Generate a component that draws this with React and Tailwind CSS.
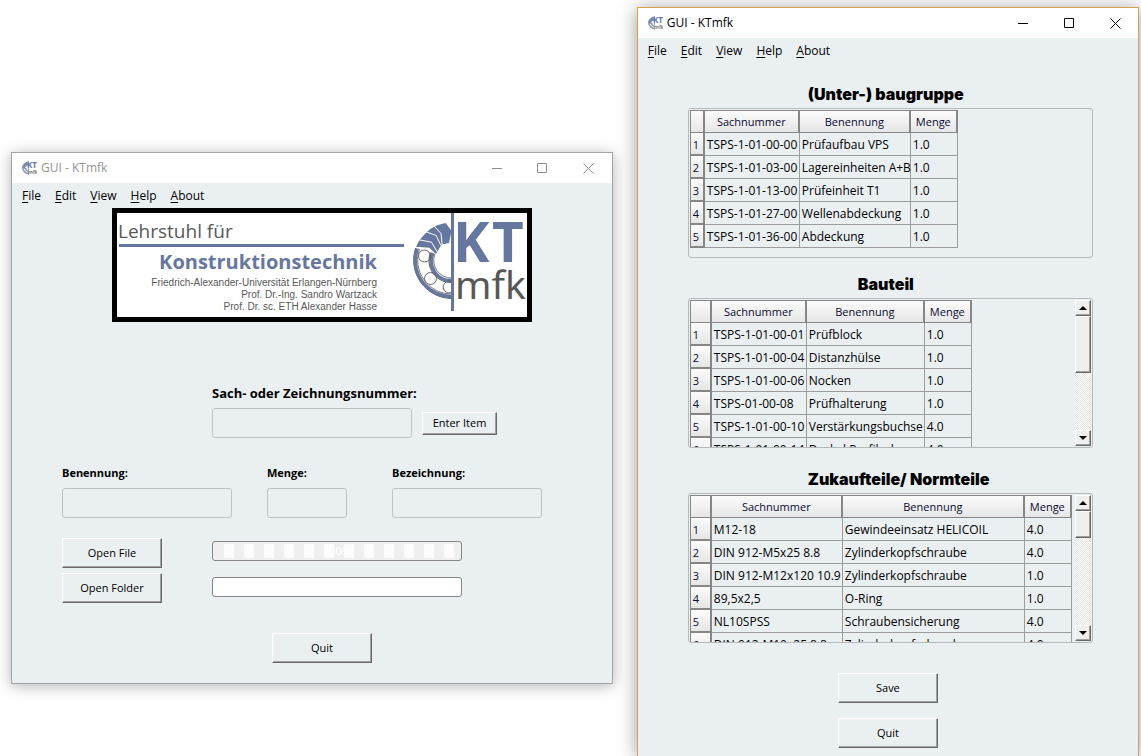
import React from "react";

const BUTTON =
  "border border-t-white border-l-white border-r-[#696969] border-b-[#696969] bg-[#eaeff2] text-[11px] leading-4 shadow-[inset_-1px_-1px_0_#a0a0a0,inset_1px_1px_0_#f0f0f0]";
const FIELD =
  "block h-[30px] w-full rounded-[3px] border border-[#c0c2c2] bg-transparent px-1 text-xs outline-none";

function AppIcon() {
  return (
    <svg className="size-4" viewBox="0 0 16 16" aria-hidden="true">
      <path d="M7.500 1.500A6.800 6.800 0 0 0 1 8l3 1a3.600 3.600 0 0 1 3.500-3.500z" fill="#7c8bb0" />
      <path d="M1.800 7.500a6 6 0 0 0 5.700 6M4.500 8a3.500 3.500 0 0 0 3 3.200" fill="none" stroke="#8f9bb5" strokeWidth="1.600" />
      <path d="M7.500 1v14" stroke="#9aa6c3" />
      <text x="6" y="8" fontSize="8" fontWeight="700" fontFamily="Noto Sans, sans-serif" fill="#6478a6">KT</text>
      <text x="7" y="14" fontSize="5" fontWeight="700" fontFamily="Noto Sans, sans-serif" fill="#7d7d7d">mfk</text>
    </svg>
  );
}

function TitleBar({ active }) {
  return (
    <header className="flex h-[30px] items-center bg-white pl-[9px]">
      <AppIcon />
      <h1 className={active ? "ml-1 grow text-xs text-black" : "ml-1 grow text-xs text-[#949494]"}>GUI - KTmfk</h1>
      <div className={active ? "flex text-black" : "flex text-[#8f8f8f]"}>
        <button type="button" aria-label="Minimize" className="grid h-[30px] w-[45px] place-items-center">
          <svg width="11" height="11" viewBox="0 0 11 11" stroke="currentColor" fill="none"><path d="M0 5.500h10" /></svg>
        </button>
        <button type="button" aria-label="Maximize" className="grid h-[30px] w-[46px] place-items-center">
          <svg width="11" height="11" viewBox="0 0 11 11" stroke="currentColor" fill="none"><path d="M.5 .5h9v9h-9z" /></svg>
        </button>
        <button type="button" aria-label="Close" className="grid h-[30px] w-[46px] place-items-center">
          <svg width="11" height="11" viewBox="0 0 11 11" stroke="currentColor" fill="none"><path d="M.5 .5l10 10M10.500 .5l-10 10" /></svg>
        </button>
      </div>
    </header>
  );
}

function MenuBar() {
  return (
    <nav className="flex h-[25px] items-center gap-[14px] pl-[10px] text-xs">
      {["File", "Edit", "View", "Help", "About"].map((item) => (
        <button type="button" key={item}>
          <span className="underline underline-offset-2">{item[0]}</span>
          {item.slice(1)}
        </button>
      ))}
    </nav>
  );
}

function Logo() {
  return (
    <svg className="h-[104px] w-[115px]" viewBox="412 213 115 104" aria-label="KT mfk">
      <g fill="none">
        <path d="M415.600 248A38.500 38.500 0 0 0 452 298.500" stroke="#585858" />
        <path d="M417.300 248.500A36 36 0 0 0 452 296.500" stroke="#66779f" strokeWidth="3.500" />
        <path d="M419.500 249A34 34 0 0 0 452 294" stroke="#585858" strokeWidth=".8" />
        <path d="M430.500 252.500A22 22 0 0 0 452 282.500" stroke="#585858" />
        <path d="M433 253A19.500 19.500 0 0 0 452 280.500" stroke="#66779f" strokeWidth="3.500" />
        <path d="M435 254A17.500 17.500 0 0 0 452 278" stroke="#585858" strokeWidth=".8" />
        <g stroke="#585858" strokeWidth=".9">
          <circle cx="424.500" cy="256" r="6" />
          <circle cx="430.500" cy="278.500" r="6" />
          <path d="M452 282a5.800 5.800 0 1 0 0 10" />
        </g>
      </g>
      <path d="M416 246.700Q420 237.500 430 229.300Q437 224.300 445.700 223L451.500 231L449 243L441.500 244.500L436 254L429.300 247.700Z" fill="#66779f" />
      <path d="M420 240l11.500 2.200 6.200 10.500M426.500 232l9.700 3.500 4.600 9.800M434 226l7 7.500 1.200 11" fill="none" stroke="#fff" strokeWidth="1" />
      <path d="M452.500 213v98" stroke="#66779f" strokeWidth="3" />
      <g fontSize="55" fontWeight="700" fontFamily="Noto Sans, sans-serif" fill="#66779f">
        <text x="453" y="262">K</text>
        <text x="492" y="262">T</text>
      </g>
      <text x="455" y="299" fontSize="39" fontFamily="Noto Sans, sans-serif" fill="#585858">mfk</text>
    </svg>
  );
}

function Banner() {
  return (
    <div className="ml-[100px] flex w-[420px] justify-between border-[5px] border-black bg-white text-[#585858]">
      <div className="w-[287px] pt-[5px]">
        <p className="pl-px text-[19px] leading-[26px]">Lehrstuhl für</p>
        <hr className="ml-[2px] h-[3px] border-0 bg-[#66779f]" />
        <div className="pr-[27px] text-right font-[Liberation_Sans,sans-serif] text-[10px] leading-3 whitespace-nowrap">
          <p className="font-[Open_Sans,Noto_Sans,sans-serif] text-[20px] font-bold leading-[30px] text-[#66779f]">Konstruktionstechnik</p>
          <p>Friedrich-Alexander-Universität Erlangen-Nürnberg</p>
          <p>Prof. Dr.-Ing. Sandro Wartzack</p>
          <p>Prof. Dr. sc. ETH Alexander Hasse</p>
        </div>
      </div>
      <Logo />
    </div>
  );
}

function Field({ id, label, className }) {
  return (
    <div className={className}>
      <label htmlFor={id} className="block text-[11px] font-bold leading-[15px]">{label}</label>
      <input id={id} className={FIELD + " mt-2"} />
    </div>
  );
}

function EntryWindow() {
  return (
    <section className="mt-[152px] grow-[602] basis-0 self-start border border-[#a4a4a4] bg-[#eaeff2] pb-5 shadow-[0_2px_14px_rgba(0,0,0,0.3)]">
      <TitleBar active={false} />
      <MenuBar />
      <Banner />
      <form className="px-[50px] pt-[63px]" onSubmit={(e) => e.preventDefault()}>
        <div className="pl-[150px]">
          <label htmlFor="nummer" className="block text-[13px] font-bold leading-4">Sach- oder Zeichnungsnummer:</label>
          <div className="mt-[7px] flex items-center gap-[10px]">
            <div className="w-[200px]"><input id="nummer" className={FIELD} /></div>
            <button type="button" className={BUTTON + " h-[23px] w-[75px]"}>Enter Item</button>
          </div>
        </div>
        <div className="mt-[27px] flex">
          <Field id="benennung" label="Benennung:" className="w-[170px]" />
          <Field id="menge" label="Menge:" className="ml-[35px] w-[80px]" />
          <Field id="bezeichnung" label="Bezeichnung:" className="ml-[45px] w-[150px]" />
        </div>
        <div className="mt-5 flex gap-[50px]">
          <button type="button" className={BUTTON + " h-[30px] w-[100px]"}>Open File</button>
          <div role="progressbar" aria-label="File" aria-valuenow={100} className="mt-[3px] flex h-5 w-[250px] items-center justify-center rounded-[3px] border border-[#858585] bg-[#efefef] px-px py-[2px]">
            <span className="grow bg-[repeating-linear-gradient(90deg,#efefef_0_10px,#fcfcfc_10px_20px)] text-center text-[11px] leading-[14px] text-white">100%</span>
          </div>
        </div>
        <div className="mt-[5px] flex gap-[50px]">
          <button type="button" className={BUTTON + " h-[30px] w-[100px]"}>Open Folder</button>
          <div role="progressbar" aria-label="Folder" aria-valuenow={0} className="mt-1 h-5 w-[250px] rounded-[3px] border border-[#858585] bg-white" />
        </div>
        <button type="button" className={BUTTON + " mt-[30px] ml-[210px] block h-[30px] w-[100px]"}>Quit</button>
      </form>
    </section>
  );
}

const HEAD =
  "h-[23px] border-r-2 border-[#868686] bg-linear-to-b from-[#fbfbfb] to-[#e6e6e6] p-0 text-[11px] font-normal leading-4 text-[#0a0a33]";
const CELL = "h-[23px] border-r border-b border-[#9c9c9c] p-0 pt-[2px] pl-[2px] leading-4";

function ScrollBar({ thumb }) {
  const part =
    "w-4 border border-t-white border-l-white border-r-[#696969] border-b-[#696969] bg-[#efefef] shadow-[inset_-1px_-1px_0_#a0a0a0]";
  return (
    <div className="flex w-4 shrink-0 flex-col bg-[repeating-conic-gradient(#e4e4e4_0_25%,#ffffff_0_50%)] bg-size-[2px_2px]">
      <button type="button" aria-label="Scroll up" className={part + " grid h-4 shrink-0 place-items-center"}>
        <svg width="8" height="4" viewBox="0 0 8 4"><path d="M4 0L8 4H0z" /></svg>
      </button>
      <div className={part + " " + thumb} />
      <button type="button" aria-label="Scroll down" className={part + " mt-auto grid h-4 shrink-0 place-items-center"}>
        <svg width="8" height="4" viewBox="0 0 8 4"><path d="M0 0h8L4 4z" /></svg>
      </button>
    </div>
  );
}

function PartsTable({ title, titleClass, width, cols, rows, thumb }) {
  return (
    <section>
      <h2 className={"text-[16px] font-black leading-5 font-[Inter,sans-serif] " + titleClass}>{title}</h2>
      <div className="mt-1 flex h-[150px] justify-between overflow-hidden rounded-[3px] border border-[#b4b9ba] p-px">
        <table aria-label={title} className={"table-fixed self-start border-separate border-spacing-0 whitespace-nowrap text-left text-xs " + width}>
          <thead>
            <tr>
              <th className={HEAD + " border-y border-l " + cols[0]} aria-label="Nr." />
              <th className={HEAD + " border-y text-center " + cols[1]}>Sachnummer</th>
              <th className={HEAD + " border-y text-center " + cols[2]}>Benennung</th>
              <th className={HEAD + " w-[47px] border-y border-r text-center"}>Menge</th>
            </tr>
          </thead>
          <tbody>
            {rows.map((row, i) => (
              <tr key={i}>
                <th scope="row" className={HEAD + " border-b-2 border-l pt-[2px] pl-[2px] text-left"}>{i + 1}</th>
                {row.map((text, j) => (
                  <td key={j} className={CELL}>{text}</td>
                ))}
              </tr>
            ))}
          </tbody>
        </table>
        {thumb && <ScrollBar thumb={thumb} />}
      </div>
    </section>
  );
}

const ASSEMBLIES = [
  ["TSPS-1-01-00-00", "Prüfaufbau VPS", "1.0"],
  ["TSPS-1-01-03-00", "Lagereinheiten A+B", "1.0"],
  ["TSPS-1-01-13-00", "Prüfeinheit T1", "1.0"],
  ["TSPS-1-01-27-00", "Wellenabdeckung", "1.0"],
  ["TSPS-1-01-36-00", "Abdeckung", "1.0"],
];
const PARTS = [
  ["TSPS-1-01-00-01", "Prüfblock", "1.0"],
  ["TSPS-1-01-00-04", "Distanzhülse", "1.0"],
  ["TSPS-1-01-00-06", "Nocken", "1.0"],
  ["TSPS-01-00-08", "Prüfhalterung", "1.0"],
  ["TSPS-1-01-00-10", "Verstärkungsbuchse", "4.0"],
  ["TSPS-1-01-00-14", "Deckel Profilrohr", "4.0"],
];
const STANDARD_PARTS = [
  ["M12-18", "Gewindeeinsatz HELICOIL", "4.0"],
  ["DIN 912-M5x25 8.8", "Zylinderkopfschraube", "4.0"],
  ["DIN 912-M12x120 10.9", "Zylinderkopfschraube", "1.0"],
  ["89,5x2,5", "O-Ring", "1.0"],
  ["NL10SPSS", "Schraubensicherung", "4.0"],
  ["DIN 912-M10x25 8.8", "Zylinderkopfschraube", "4.0"],
];

function ListWindow() {
  return (
    <section className="mt-[7px] grow-[502] basis-0 border border-b-0 border-[#dba04e] bg-[#eaeff2] pb-2 shadow-[0_2px_18px_rgba(0,0,0,0.4)]">
      <TitleBar active />
      <MenuBar />
      <div className="flex flex-col gap-4 pl-[50px] pr-[45px] pt-[21px]">
        <PartsTable title="(Unter-) baugruppe" titleClass="pl-[120px]" width="w-[268px]" cols={["w-[15px]", "w-[95px]", "w-[111px]"]} rows={ASSEMBLIES} />
        <PartsTable title="Bauteil" titleClass="pl-[170px]" width="w-[282px]" cols={["w-[22px]", "w-[95px]", "w-[118px]"]} rows={PARTS} thumb="h-[57px]" />
        <div className="pt-[5px]">
          <PartsTable title="Zukaufteile/ Normteile" titleClass="pl-[120px]" width="w-[382px]" cols={["w-[22px]", "w-[131px]", "w-[182px]"]} rows={STANDARD_PARTS} thumb="h-[27px]" />
        </div>
      </div>
      <div className="mt-[30px] flex flex-col items-center gap-[15px]">
        <button type="button" className={BUTTON + " h-[30px] w-[100px]"}>Save</button>
        <button type="button" className={BUTTON + " h-[30px] w-[100px]"}>Quit</button>
      </div>
    </section>
  );
}

export default function App() {
  return (
    <main className="flex min-h-screen gap-6 overflow-hidden bg-white pr-[2px] pl-[11px] font-[Open_Sans,Noto_Sans,sans-serif] text-black">
      <EntryWindow />
      <ListWindow />
    </main>
  );
}
